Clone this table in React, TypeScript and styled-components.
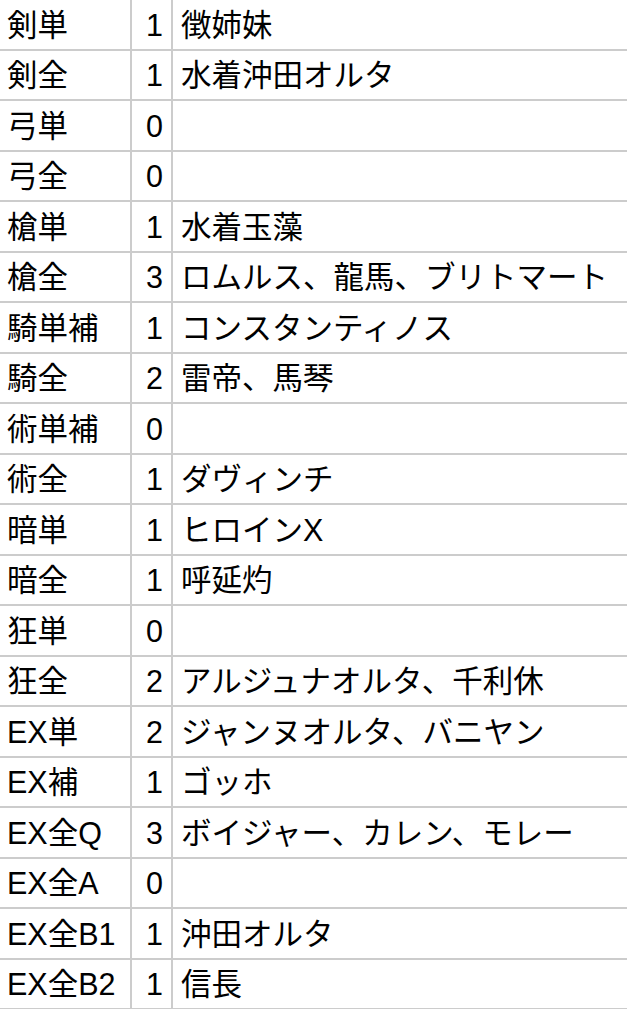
import React from "react";
import styled, { createGlobalStyle } from "styled-components";

const GlobalStyle = createGlobalStyle`
  html, body { margin: 0; padding: 0; background: #fff; }
  body { font-family: "Liberation Sans", "Noto Sans CJK JP", sans-serif; color: #000; }
`;

const Table = styled.div`
  display: flex;
  flex-direction: column;
  width: 627px;
`;

const Row = styled.div`
  display: grid;
  grid-template-columns: 132px 41px 1fr;
  height: 50.5px;
  box-sizing: border-box;
  border-bottom: 2px solid #cccccc;
`;

const Cell = styled.div<{ $align?: "left" | "right"; $divider?: boolean; $pad?: number }>`
  display: flex;
  align-items: center;
  justify-content: ${(p) => (p.$align === "right" ? "flex-end" : "flex-start")};
  box-sizing: border-box;
  border-right: ${(p) => (p.$divider ? "2px solid #cccccc" : "none")};
  padding: ${(p) => (p.$align === "right" ? `1px 8px 0 0` : `1px 0 0 ${p.$pad ?? 7}px`)};
  font-size: 30.5px;
  line-height: 1;
  white-space: nowrap;
  overflow: hidden;
`;

const rows: [string, number, string][] = [
  ["剣単", 1, "徴姉妹"],
  ["剣全", 1, "水着沖田オルタ"],
  ["弓単", 0, ""],
  ["弓全", 0, ""],
  ["槍単", 1, "水着玉藻"],
  ["槍全", 3, "ロムルス、龍馬、ブリトマート"],
  ["騎単補", 1, "コンスタンティノス"],
  ["騎全", 2, "雷帝、馬琴"],
  ["術単補", 0, ""],
  ["術全", 1, "ダヴィンチ"],
  ["暗単", 1, "ヒロインX"],
  ["暗全", 1, "呼延灼"],
  ["狂単", 0, ""],
  ["狂全", 2, "アルジュナオルタ、千利休"],
  ["EX単", 2, "ジャンヌオルタ、バニヤン"],
  ["EX補", 1, "ゴッホ"],
  ["EX全Q", 3, "ボイジャー、カレン、モレー"],
  ["EX全A", 0, ""],
  ["EX全B1", 1, "沖田オルタ"],
  ["EX全B2", 1, "信長"],
];

export default function App() {
  return (
    <>
      <GlobalStyle />
      <Table>
        {rows.map(([k, n, names]) => (
          <Row key={k}>
            <Cell $divider>{k}</Cell>
            <Cell $divider $align="right">{n}</Cell>
            <Cell $pad={8}>{names}</Cell>
          </Row>
        ))}
      </Table>
    </>
  );
}
